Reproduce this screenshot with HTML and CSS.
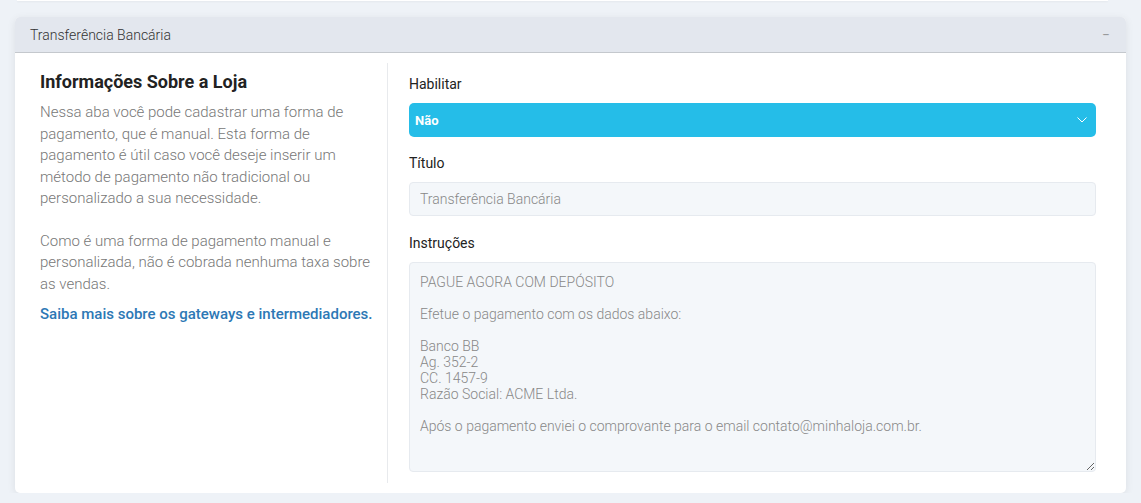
FILE: index.html
```html
<!DOCTYPE html>
<html lang="pt-BR">

<head>
    <meta charset="UTF-8">
    <meta name="viewport" content="width=device-width, initial-scale=1.0">
    <title>Transferência Bancária</title>
    <link rel="stylesheet" href="styles.css">
</head>

<body>
    <div class="page">
        <div class="prev-card"></div>

        <div class="card">
            <div class="card-header">
                <span>Transferência Bancária</span>
                <span class="collapse">&minus;</span>
            </div>

            <div class="card-body">
                <div class="info">
                    <h2>Informações Sobre a Loja</h2>
                    <p>Nessa aba você pode cadastrar uma forma de pagamento, que é manual. Esta forma de pagamento é útil caso você deseje inserir um método de pagamento não tradicional ou personalizado a sua necessidade.</p>
                    <p>Como é uma forma de pagamento manual e personalizada, não é cobrada nenhuma taxa sobre as vendas.</p>
                    <a href="#" class="more">Saiba mais sobre os gateways e intermediadores.</a>
                </div>

                <div class="form">
                    <label for="enable">Habilitar</label>
                    <div class="select">
                        <span>Não</span>
                        <svg width="10" height="6" viewBox="0 0 10 6"><path d="M0.5 0.5 L5 5 L9.5 0.5" fill="none" stroke="#ffffff" stroke-width="1"/></svg>
                    </div>

                    <label for="title">Título</label>
                    <input type="text" id="title" value="Transferência Bancária">

                    <label for="instructions">Instruções</label>
                    <textarea id="instructions">PAGUE AGORA COM DEPÓSITO

Efetue o pagamento com os dados abaixo:

Banco BB
Ag. 352-2
CC. 1457-9
Razão Social: ACME Ltda.

Após o pagamento enviei o comprovante para o email contato@minhaloja.com.br.</textarea>
                </div>
            </div>
        </div>
    </div>
</body>

</html>
```

FILE: styles.css
```css
body {
    margin: 0;
    background-color: #eef2f7;
    font-family: Roboto, 'Liberation Sans', sans-serif;
}

.page {
    padding: 0 15px;
}

.prev-card {
    height: 1px;
    margin: 0 18px 0 2px;
    background: white;
    box-shadow: 0 1px 2px rgba(0, 0, 0, 0.06);
}

.card {
    margin-top: 16px;
    background: white;
    border-radius: 5px;
    box-shadow: 0 2px 8px rgba(0, 0, 0, 0.08);
}

.card-header {
    display: flex;
    justify-content: space-between;
    align-items: center;
    height: 35px;
    padding: 0 15px;
    background: #e3e7ee;
    border-bottom: 1px solid #c4c8cd;
    border-radius: 5px 5px 0 0;
    font-size: 14px;
    font-weight: 300;
    color: #333;
}

.collapse {
    color: #777;
    font-size: 14px;
    margin-right: 1px;
}

.card-body {
    display: grid;
    grid-template-columns: 373px 1fr;
    padding: 10px 30px 10px 0;
}

.info {
    padding: 8px 10px 0 25px;
    border-right: 1px solid #e8eaed;
    min-height: 412px;
}

.info h2 {
    margin: 0 0 10px;
    font-size: 18px;
    font-weight: bold;
    color: #222;
}

.info p {
    margin: 0 0 21px;
    font-size: 15px;
    font-weight: 300;
    line-height: 21.5px;
    color: #777;
}

.more {
    display: block;
    margin-top: -11px;
    font-size: 15px;
    font-weight: 500;
    color: #2d78b5;
    text-decoration: none;
}

.form {
    padding: 13px 0 0 21px;
}

label {
    display: block;
    margin-bottom: 11px;
    font-size: 14px;
    color: #222;
}

.select {
    display: flex;
    justify-content: space-between;
    align-items: center;
    height: 34px;
    padding: 0 9px 0 6px;
    margin-bottom: 18px;
    background: #25bde8;
    border-radius: 5px;
    color: white;
    font-size: 13px;
    font-weight: bold;
}

input[type="text"],
textarea {
    display: block;
    width: 100%;
    box-sizing: border-box;
    background: #f4f7fa;
    border: 1px solid #e6eaef;
    border-radius: 4px;
    font-family: Roboto, 'Liberation Sans', sans-serif;
    font-size: 14px;
    font-weight: 300;
    color: #888;
    margin-bottom: 19px;
}

input[type="text"] {
    height: 34px;
    padding: 0 10px;
}

textarea {
    height: 210px;
    padding: 11px 10px;
    line-height: 16px;
    resize: vertical;
    margin-bottom: 0;
}
```
